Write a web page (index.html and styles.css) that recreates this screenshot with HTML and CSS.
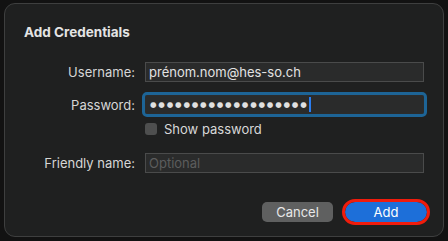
FILE: index.html
```html
<!DOCTYPE html>
<html lang="en">

<head>
    <meta charset="UTF-8" />
    <title>Add Credentials</title>
    <link rel="stylesheet" href="styles.css">
</head>

<body>
    <main class="dialog">
        <h1 class="title">Add Credentials</h1>

        <form class="form">
            <label class="label" for="username">Username:</label>
            <input class="field" type="text" id="username" value="prénom.nom@hes-so.ch" />

            <label class="label" for="password">Password:</label>
            <div class="field field-focus">
                <span class="dots">●●●●●●●●●●●●●●●●●●●</span><span class="caret"></span>
            </div>

            <span></span>
            <label class="check">
                <span class="box"></span>
                Show password
            </label>

            <label class="label label-friendly" for="friendly">Friendly name:</label>
            <input class="field field-friendly" type="text" id="friendly" placeholder="Optional" />
        </form>

        <div class="actions">
            <button class="btn btn-cancel" type="button">Cancel</button>
            <button class="btn btn-add" type="button">Add</button>
        </div>
    </main>
</body>

</html>
```

FILE: styles.css
```css
html, body {
    margin: 0;
    background: #121212;
}

body {
    padding: 3px 4px 4px 4px;
    font-family: Inter, "Noto Sans", sans-serif;
    color: #dcdcdc;
}

.dialog {
    box-sizing: border-box;
    width: 440px;
    height: 234px;
    background: #1f2020;
    border: 1px solid #3e3f3f;
    border-radius: 11px;
    padding: 20px 19px 0 19px;
}

.title {
    margin: 0;
    font-size: 13.5px;
    font-weight: 700;
    color: #e4e4e4;
    line-height: 16px;
}

.form {
    display: grid;
    grid-template-columns: 111px 279px;
    column-gap: 10px;
    margin-top: 22px;
    align-items: center;
}

.label {
    text-align: right;
    font-size: 13px;
    color: #d6d6d6;
}

.field {
    box-sizing: border-box;
    height: 20px;
    margin: 0;
    padding: 0 3px;
    background: #2a2b2b;
    border: 1px solid #4a4b4b;
    border-radius: 0;
    font-family: Inter, "Noto Sans", sans-serif;
    font-size: 13px;
    color: #e2e2e2;
    outline: none;
}

.field::placeholder {
    color: #5c5d5d;
}

.field-focus {
    margin-top: 13px;
    height: 19px;
    padding-left: 4px;
    border-color: #2b2c2c;
    outline: 3px solid #1d6496;
    border-radius: 2px;
    display: flex;
    align-items: center;
}

.dots {
    font-size: 7.5px;
    letter-spacing: 1.8px;
    color: #e0e0e0;
    font-family: "DejaVu Sans", sans-serif;
}

.caret {
    width: 2px;
    height: 15px;
    background: #2a7df0;
    margin-left: 0;
}

.form .label:nth-of-type(2) {
    margin-top: 13px;
}

.check {
    display: flex;
    align-items: center;
    gap: 7px;
    margin-top: 7px;
    font-size: 13px;
    color: #d8d8d8;
}

.box {
    width: 12px;
    height: 12px;
    background: #4e4f4f;
    border-radius: 3px;
}

.label-friendly,
.field-friendly {
    margin-top: 16px;
}

.actions {
    display: flex;
    justify-content: flex-end;
    gap: 12px;
    margin-top: 29px;
    margin-right: -3px;
}

.btn {
    height: 20px;
    border: none;
    border-radius: 5px;
    font-family: Inter, "Noto Sans", sans-serif;
    font-size: 13px;
    color: #e8e8e8;
    padding: 0;
}

.btn-cancel {
    width: 71px;
    background: #5f6060;
}

.btn-add {
    width: 82px;
    background: #1d6fd9;
    color: #ffffff;
    outline: 3px solid #f01c0c;
    border-radius: 10px;
}
```
